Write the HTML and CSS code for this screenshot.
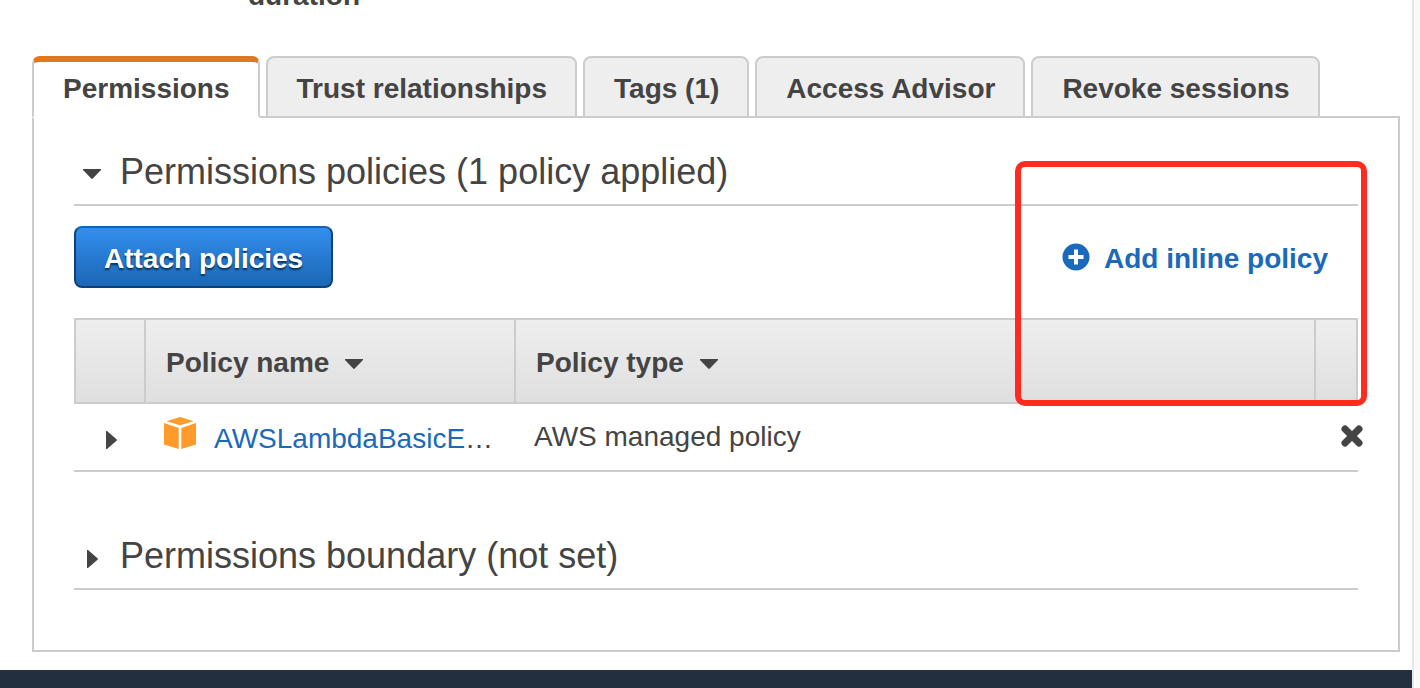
FILE: index.html
```html
<!DOCTYPE html>
<html lang="en">
<head>
<meta charset="utf-8">
<meta name="viewport" content="width=device-width, initial-scale=1">
<title>Role permissions</title>
<link rel="stylesheet" href="styles.css">
</head>
<body>
<div class="page">
  <main class="content">
    <div class="detail"><strong class="detail-label">duration</strong></div>

    <div class="tabs" role="tablist">
      <button class="tab tab-active" type="button" role="tab" aria-selected="true">Permissions</button>
      <button class="tab" type="button" role="tab" aria-selected="false">Trust relationships</button>
      <button class="tab" type="button" role="tab" aria-selected="false">Tags (1)</button>
      <button class="tab" type="button" role="tab" aria-selected="false">Access Advisor</button>
      <button class="tab" type="button" role="tab" aria-selected="false">Revoke sessions</button>
    </div>

    <section class="panel" role="tabpanel">
      <h2 class="section-title">
        <button class="section-toggle" type="button" aria-expanded="true">
          <span class="caret-slot"><svg class="caret-down" viewBox="0 0 18 10" aria-hidden="true"><path d="M0 0h18v1l-8.200 8.600q-.8.800-1.600 0L0 1z"/></svg></span>
          Permissions policies (1 policy applied)
        </button>
      </h2>

      <div class="actions">
        <button class="primary" type="button">Attach policies</button>
        <a class="add-link" href="#">
          <svg class="plus" viewBox="0 0 28 28" aria-hidden="true"><circle cx="14" cy="14" r="13.500"/><path d="M14 6.500v15M6.500 14h15"/></svg>
          Add inline policy
        </a>
      </div>

      <table class="policies">
        <colgroup><col class="col-expand"><col class="col-name"><col><col class="col-remove"></colgroup>
        <thead>
          <tr>
            <th></th>
            <th><button class="sort" type="button">Policy name <svg class="caret-down" viewBox="0 0 18 10" aria-hidden="true"><path d="M0 0h18v1l-8.200 8.600q-.8.800-1.600 0L0 1z"/></svg></button></th>
            <th><button class="sort" type="button">Policy type <svg class="caret-down" viewBox="0 0 18 10" aria-hidden="true"><path d="M0 0h18v1l-8.200 8.600q-.8.800-1.600 0L0 1z"/></svg></button></th>
            <th></th>
          </tr>
        </thead>
        <tbody>
          <tr>
            <td class="cell-expand"><button class="icon-button" type="button" aria-label="Expand policy"><svg class="caret-right" viewBox="0 0 11 18" aria-hidden="true"><path d="M0 0h1l9.500 8.200q.8.800 0 1.600L1 18H0z"/></svg></button></td>
            <td>
              <div class="policy">
                <svg class="cube" viewBox="0 0 32 32" aria-hidden="true"><path d="M16 0 29.500 4.300 16 8.200 2.500 4.300zM0 6l14.700 5v21L0 27.500zM32 6l-14.700 5v21L32 27.500z"/></svg>
                <span class="policy-name"><a href="#">AWSLambdaBasicExecutionRole</a></span>
              </div>
            </td>
            <td>AWS managed policy</td>
            <td class="cell-remove"><button class="icon-button" type="button" aria-label="Detach policy"><svg class="cross" viewBox="0 0 24 24" aria-hidden="true"><path d="M5 5l14 14M19 5 5 19"/></svg></button></td>
          </tr>
        </tbody>
      </table>

      <h2 class="section-title section-boundary">
        <button class="section-toggle" type="button" aria-expanded="false">
          <span class="caret-slot"><svg class="caret-right" viewBox="0 0 11 18" aria-hidden="true"><path d="M0 0h1l9.500 8.200q.8.800 0 1.600L1 18H0z"/></svg></span>
          Permissions boundary (not set)
        </button>
      </h2>

      <div class="highlight"></div>
    </section>
    <footer class="footer"></footer>
  </main>
  <div class="gutter"></div>
</div>
</body>
</html>
```
FILE: styles.css
```css
* {
  box-sizing: border-box;
}

body {
  margin: 0;
  background: #fff;
  color: #444;
  font: 28px/32px "Helvetica Neue", "Liberation Sans", Arial, sans-serif;
}

button {
  margin: 0;
  padding: 0;
  border: 0;
  background: none;
  color: inherit;
  font: inherit;
  cursor: pointer;
}

a {
  color: #1b69ba;
  text-decoration: none;
}

svg {
  flex: none;
  fill: currentColor;
}

.page {
  display: flex;
  min-height: 100vh;
}

.content {
  display: flex;
  flex: 1;
  flex-direction: column;
  min-width: 0;
}

.gutter {
  flex: none;
  width: 8px;
  border-left: 2px solid #e7e7e7;
  background: #fafafa;
}

.detail {
  display: flex;
  align-items: flex-end;
  height: 12px;
  margin-bottom: 44px;
  padding-left: 248px;
  overflow: hidden;
}

.tabs {
  display: flex;
  gap: 6px;
  z-index: 1;
  margin: 0 12px -2px 32px;
}

.tab {
  height: 62px;
  padding: 4px 28px 0 29px;
  border: 2px solid #ccc;
  border-radius: 8px 8px 0 0;
  background: #eee;
  font-weight: bold;
  white-space: nowrap;
}

.tab-active {
  border-top: 6px solid #e07820;
  border-bottom-color: #fff;
  background: #fff;
  padding-top: 0;
}

.panel {
  position: relative;
  margin: 0 12px 18px 32px;
  padding: 28px 40px 60px;
  border: 2px solid #ccc;
}

.section-title {
  margin: 0;
  padding-bottom: 6px;
  border-bottom: 2px solid #ccc;
  font-size: 36px;
  font-weight: normal;
  line-height: 52px;
}

.section-toggle {
  display: flex;
  align-items: center;
  text-align: left;
}

.caret-slot {
  display: flex;
  justify-content: center;
  width: 36px;
  margin-right: 10px;
  padding-top: 4px;
}

.caret-down {
  width: 18px;
  height: 10px;
}

.caret-right {
  width: 11px;
  height: 18px;
}

.actions {
  display: flex;
  align-items: center;
  justify-content: space-between;
  margin: 20px 0 30px;
  padding-right: 30px;
}

.primary {
  height: 62px;
  padding: 4px 28px 0;
  border: 2px solid #0e4275;
  border-top-color: #1a62ad;
  border-radius: 8px;
  background: linear-gradient(#338eed, #1b67b6);
  color: #fff;
  font-weight: bold;
  text-shadow: 0 2px 2px #073053;
}

.add-link {
  display: flex;
  align-items: center;
  gap: 14px;
  padding-top: 4px;
  font-weight: bold;
}

.plus {
  width: 28px;
  height: 28px;
  margin-bottom: 4px;
}

.plus path {
  stroke: #fff;
  stroke-width: 4;
}

.policies {
  width: 100%;
  border-spacing: 0;
  table-layout: fixed;
}

.col-expand {
  width: 70px;
}

.col-name {
  width: 370px;
}

.col-remove {
  width: 44px;
}

.policies th {
  height: 86px;
  padding: 4px 0 0 20px;
  border: 2px solid #ccc;
  border-right-width: 0;
  background: linear-gradient(#eee, #dfdfdf);
  text-align: left;
}

.policies th:last-child {
  border-right-width: 2px;
}

.sort {
  display: flex;
  align-items: center;
  gap: 16px;
  font-weight: bold;
}

.sort .caret-down {
  margin-top: 2px;
}

.policies td {
  height: 68px;
  padding: 0 20px;
  border-bottom: 2px solid #ccc;
}

.policies .cell-expand {
  padding: 6px 0 0 32px;
}

.policies .cell-remove {
  padding: 0 0 2px 26px;
}

.icon-button {
  display: flex;
}

.policy {
  display: flex;
  align-items: center;
  gap: 18px;
  padding-top: 4px;
}

.cube {
  width: 32px;
  height: 32px;
  margin-bottom: 12px;
  fill: #ff9a2b;
}

.policy-name {
  overflow: hidden;
  text-overflow: ellipsis;
  white-space: nowrap;
}

.cross {
  width: 24px;
  height: 24px;
  stroke: currentColor;
  stroke-width: 7;
  stroke-linecap: round;
}

.section-boundary {
  margin-top: 58px;
}

.section-boundary .caret-slot {
  padding-top: 6px;
}

.highlight {
  position: absolute;
  top: 43px;
  right: 31px;
  width: 352px;
  height: 245px;
  border: 6px solid #ff2b20;
  border-radius: 10px;
  pointer-events: none;
}

.footer {
  flex: 1;
  min-height: 18px;
  background: #232f3e;
}
```
